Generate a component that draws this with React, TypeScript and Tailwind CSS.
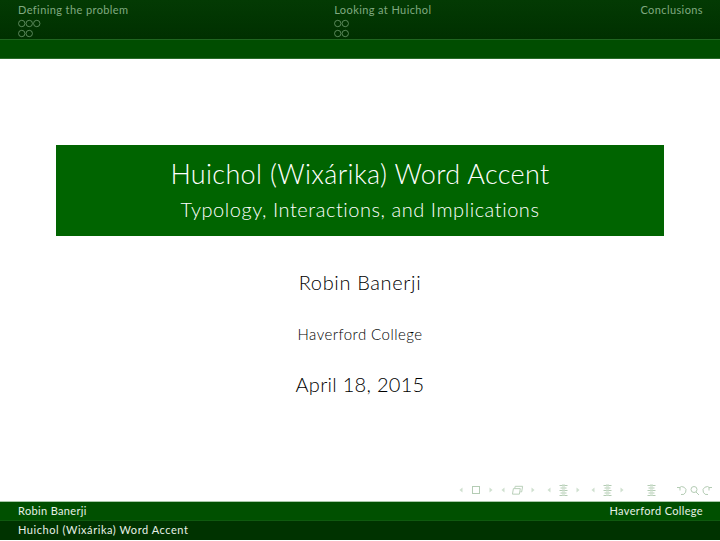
import React from "react";

const font = { fontFamily: '"Lato", "Open Sans", sans-serif' };

function Dots({ n }: { n: number }) {
  return (
    <svg width={n * 7.5} height="9" viewBox={`0 0 ${n * 7.5} 9`} className="block">
      {Array.from({ length: n }).map((_, i) => (
        <circle key={i} cx={3.75 + i * 7.5} cy="4.5" r="3.2" fill="none" stroke="#7ca87c" strokeWidth="0.7" />
      ))}
    </svg>
  );
}

function Section({ title, rows, className }: { title: string; rows: number[]; className: string }) {
  return (
    <div className={className}>
      <div className="h-[19px] pt-[3px] text-[11px] leading-[14px] tracking-[0.4px] text-[#80aa80]">{title}</div>
      <div className="flex flex-col gap-[0.5px]">
        {rows.map((n, i) => (
          <Dots key={i} n={n} />
        ))}
      </div>
    </div>
  );
}

function Tri({ dir }: { dir: "l" | "r" }) {
  return (
    <svg width="4" height="6" viewBox="0 0 4 6" className="block">
      <path d={dir === "l" ? "M3.5 0.5 L0.5 3 L3.5 5.5 Z" : "M0.5 0.5 L3.5 3 L0.5 5.5 Z"} fill="#cfe0cf" />
    </svg>
  );
}

function Stack() {
  return (
    <svg width="9" height="14" viewBox="0 0 9 14" className="block">
      <g stroke="#b4ccb4" strokeWidth="1" fill="none">
        <path d="M0.5 2.5 H8.5 M1.5 5 H7.5 M0.5 7.5 H8.5 M1.5 10 H7.5 M0.5 12.5 H8.5" />
      </g>
      <path d="M3 1 H6 V13 H3 Z" fill="#cfe0cf" opacity="0.6" />
    </svg>
  );
}

export default function App() {
  return (
    <div style={font} className="flex h-[541px] w-[720px] flex-col overflow-hidden bg-white">
      <header className="flex h-[39px] bg-[linear-gradient(#033a03,#003000)] pl-[18px] pr-[17px]">
        <Section title="Defining the problem" rows={[3, 2]} className="w-[317px]" />
        <Section title="Looking at Huichol" rows={[2, 2]} className="w-[307px]" />
        <div className="h-[20px] flex-1 pt-[3px] text-right text-[11px] leading-[14px] tracking-[0.4px] text-[#80aa80]">Conclusions</div>
      </header>
      <div className="h-[20px] border-y border-y-[#1f661f] border-b-[#2a6b2a] bg-[#004d00]" />

      <main className="flex flex-1 flex-col items-center pt-[86px] text-black">
        <div className="flex h-[91px] w-[608px] flex-col items-center bg-[#006400] text-white">
          <h1 className="mt-[13px] text-[27px] font-light leading-[32px] tracking-[0.33px]">Huichol (Wixárika) Word Accent</h1>
          <p className="mt-[7px] text-[20px] font-light leading-[24px] tracking-[0.55px]">Typology, Interactions, and Implications</p>
        </div>
        <p className="mt-[34px] text-[20px] font-light leading-[24px] tracking-[0.65px]">Robin Banerji</p>
        <p className="mt-[31px] text-[15px] font-light leading-[18px] tracking-[0.45px]">Haverford College</p>
        <p className="mt-[29px] text-[20px] font-light leading-[24px] tracking-[0.3px]">April 18, 2015</p>
        <div className="mt-auto mb-[4px] flex h-[14px] w-full items-center justify-end pr-[7px]">
          <div className="flex items-center gap-[9px]">
            <Tri dir="l" />
            <span className="block h-[8px] w-[8px] border border-[#b4ccb4]" />
            <Tri dir="r" />
          </div>
          <div className="ml-[8px] flex items-center gap-[7px]">
            <Tri dir="l" />
            <svg width="12" height="10" viewBox="0 0 13 10" className="block" fill="none" stroke="#b4ccb4">
              <path d="M1.5 3.5 H9 L8 9.5 H0.5 Z M3 3 L3.5 1 H11.5 L10.5 7 H9" />
            </svg>
            <Tri dir="r" />
          </div>
          <div className="ml-[12px] flex items-center gap-[8px]">
            <Tri dir="l" />
            <Stack />
            <Tri dir="r" />
          </div>
          <div className="ml-[11px] flex items-center gap-[8px]">
            <Tri dir="l" />
            <Stack />
            <Tri dir="r" />
          </div>
          <div className="ml-[23px]"><Stack /></div>
          <svg width="37" height="11" viewBox="0 0 37 11" className="ml-[20px] block" fill="none" stroke="#b4ccb4">
            <path d="M3 3 A4 4 0 1 1 5 9.5 M1 2.5 H4 V5.5" />
            <circle cx="18" cy="4.5" r="3" />
            <path d="M20 7 L23 10" />
            <path d="M34 3 A4 4 0 1 0 32 9.5 M36 2.5 H33 V5.5" />
          </svg>
        </div>
      </main>

      <footer className="mb-px text-[11px]">
        <div className="flex h-[19px] items-center justify-between border-t border-t-[#a8c8a8] bg-[#005000] pl-[18px] pr-[17px] tracking-[0.35px] text-[#e6f0e6]">
          <span>Robin Banerji</span>
          <span>Haverford College</span>
        </div>
        <div className="flex h-[20px] items-center border-t border-t-[#0f5a0f] bg-[#003300] pl-[18px] pr-[17px] tracking-[0.55px] text-[#e6f0e6]">
          Huichol (Wixárika) Word Accent
        </div>
      </footer>
    </div>
  );
}
